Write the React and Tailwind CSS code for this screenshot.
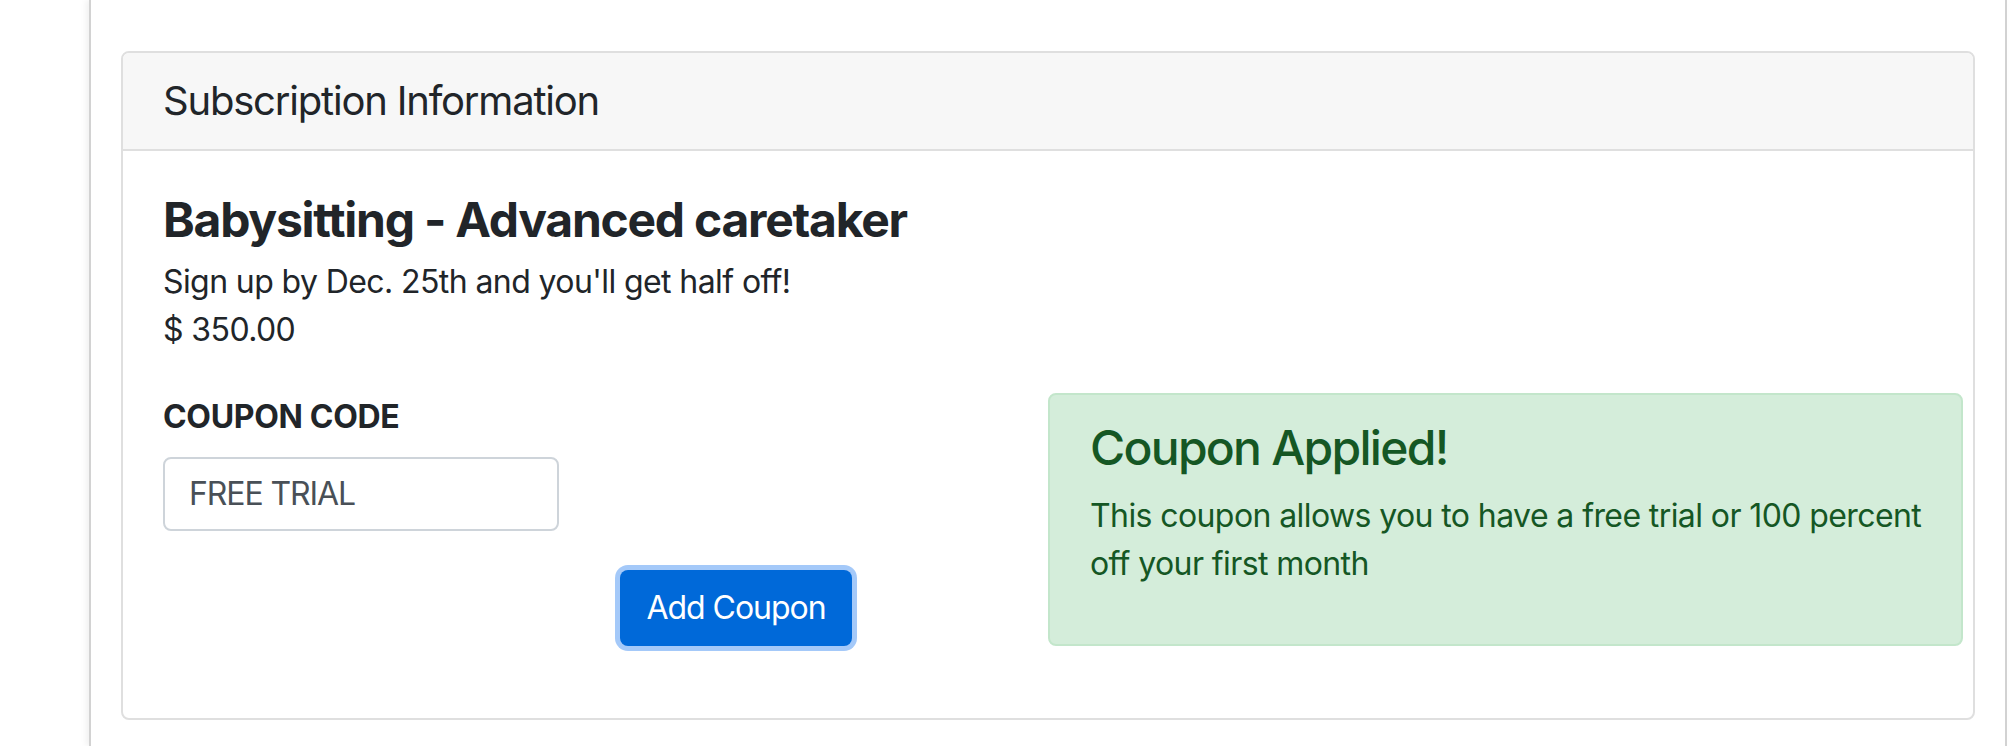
import React from 'react';

const App = () => {
  return (
    <div className="min-h-screen bg-white font-['Inter','Noto_Sans',sans-serif] text-[#212529] tracking-[-0.037em]">
      {/* outer page box */}
      <div className="ml-[89px] w-[1918px] min-h-[746px] border-x-2 border-[#d2d2d2] shadow-[-3px_0_6px_rgba(0,0,0,0.06)] px-[30px] pt-[51px]">
        {/* card */}
        <div className="rounded-[8px] border-2 border-[#dfdfdf] bg-white">
          <div className="bg-[#f7f7f7] border-b-2 border-[#dfdfdf] rounded-t-[6px] px-[40px] py-[24px]">
            <h5 className="text-[40px] leading-[48px] font-normal tracking-[-0.03em]">Subscription Information</h5>
          </div>

          <div className="px-[40px] pt-[40px] pb-[72px]">
            <h4 className="text-[48px] leading-[57.6px] font-bold tracking-[-0.026em] mb-[9px]">Babysitting - Advanced caretaker</h4>
            <p className="text-[32px] leading-[48px]">Sign up by Dec. 25th and you'll get half off!</p>
            <p className="text-[32px] leading-[48px]">$ 350.00</p>

            <div className="flex mt-[39px] -mr-[30px]">
              {/* coupon form */}
              <div className="w-[885px] shrink-0">
                <label className="block text-[32px] leading-[48px] font-bold tracking-[-0.01em] mb-[16px]">COUPON CODE</label>
                <div className="w-[396px] h-[74px] rounded-[8px] border-2 border-[#ced4da] flex items-center px-[24px] text-[32px] text-[#495057] tracking-[-0.034em]">
                  FREE TRIAL
                </div>
                <div className="mt-[39px] ml-[457px]">
                  <button className="w-[232px] h-[76px] rounded-[8px] bg-[#0069d9] text-white text-[32px] tracking-[-0.032em] shadow-[0_0_0_5px_#a4c9f9]">
                    Add Coupon
                  </button>
                </div>
              </div>

              {/* alert */}
              <div className="w-[915px] shrink-0 self-start rounded-[8px] border-2 border-[#c3e6cb] bg-[#d4edda] text-[#155724] px-[40px] pt-[24px] pb-[56px]">
                <h4 className="text-[48px] leading-[57.6px] font-medium tracking-[-0.036em] mb-[16px]">Coupon Applied!</h4>
                <p className="text-[32px] leading-[48px] whitespace-nowrap">
                  This coupon allows you to have a free trial or 100 percent
                  <br />
                  off your first month
                </p>
              </div>
            </div>
          </div>
        </div>
      </div>
    </div>
  );
};

export default App;
